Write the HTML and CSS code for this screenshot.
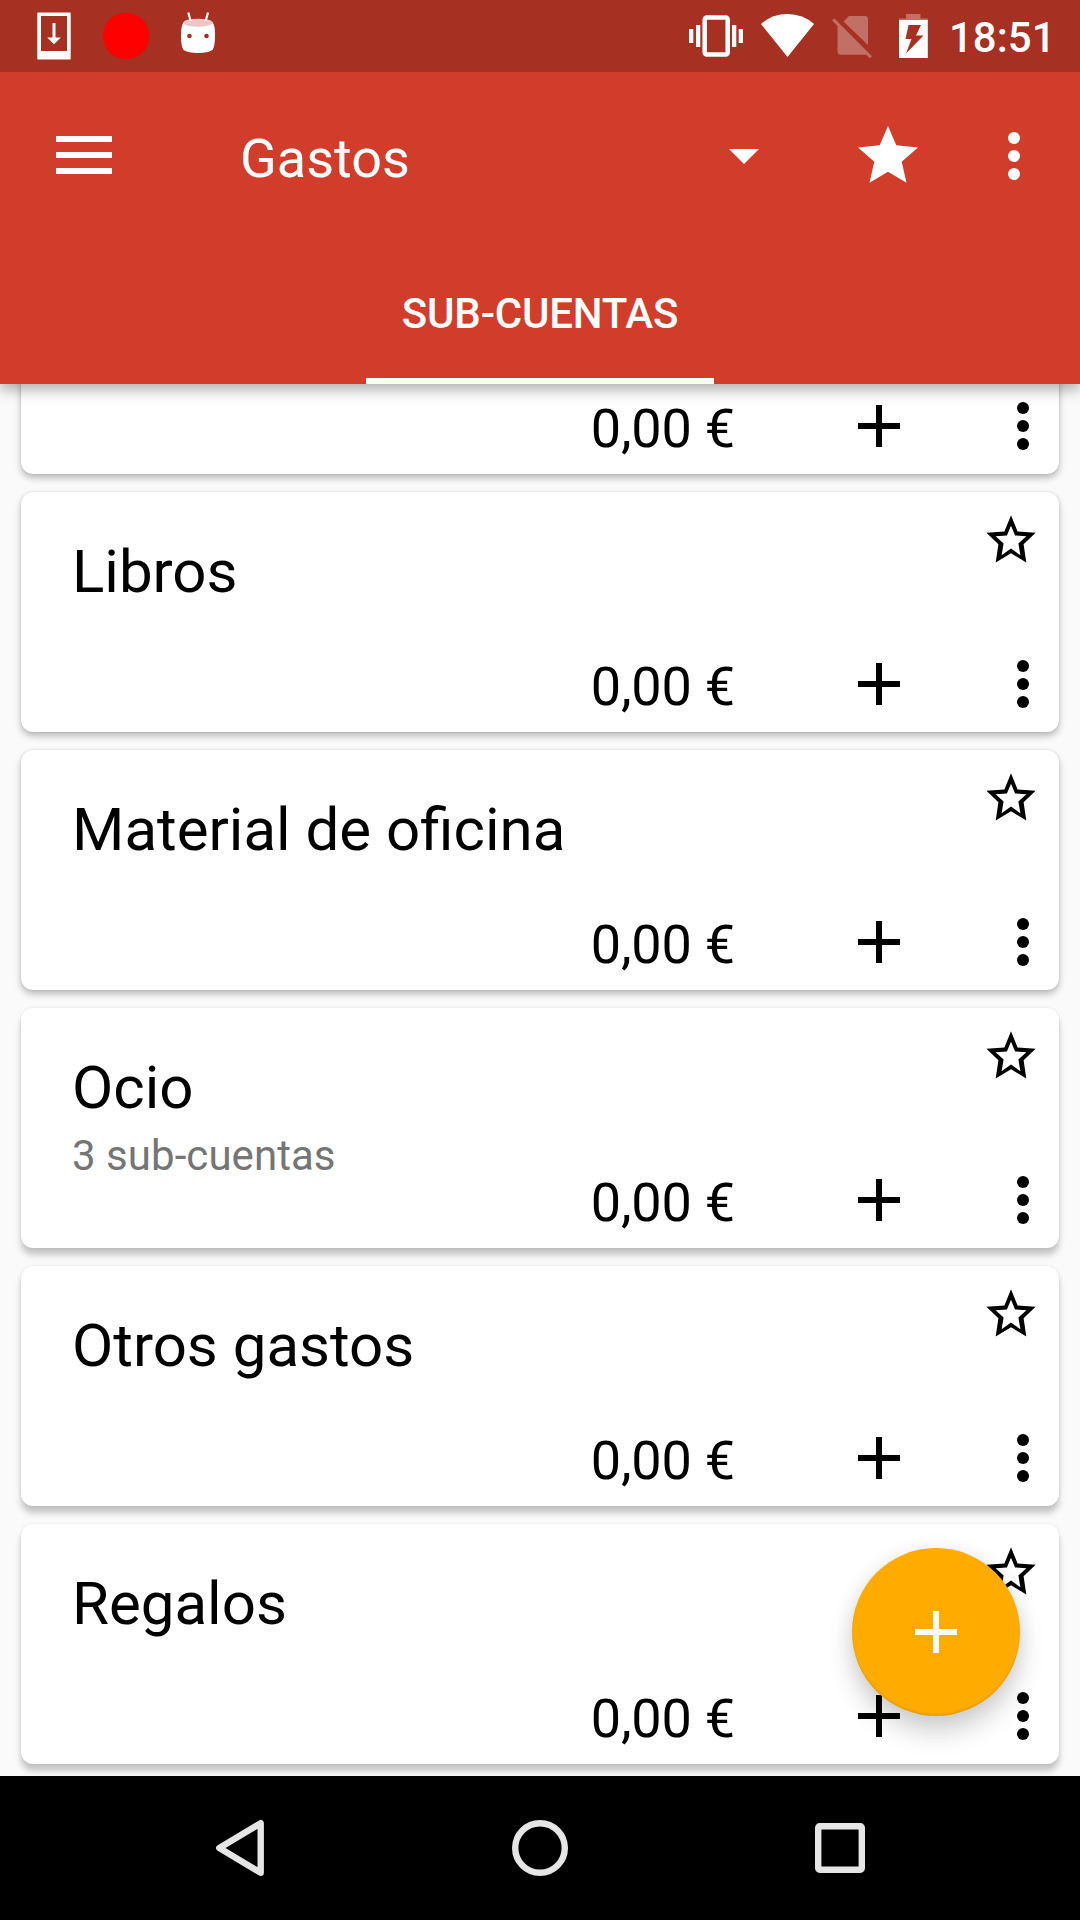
FILE: index.html
```html
<!DOCTYPE html>
<html lang="es">
<head>
<meta charset="utf-8">
<title>Gastos</title>
<link rel="stylesheet" href="styles.css">
</head>
<body>
<svg class="defs" width="0" height="0">
  <symbol id="plus" viewBox="0 0 42 42"><path d="M18 0h6v18h18v6H24v18h-6V24H0v-6h18z"/></symbol>
  <symbol id="dots" viewBox="0 0 12 48"><circle cx="6" cy="6" r="6"/><circle cx="6" cy="24" r="6"/><circle cx="6" cy="42" r="6"/></symbol>
  <symbol id="star-outline" viewBox="0 0 50 48"><path fill-rule="evenodd" d="M25 .3 31.6 16.6 49.6 17.7 37.6 29.3 40.3 47.4 25 38.2 9.7 47.4 12.4 29.3.4 17.7 18.4 16.6zM25 10.8 20.9 20.4 9.6 21.2 17.6 28.4 15.6 40.3 25 33.6 34.4 40.3 32.4 28.4 40.4 21.2 29.1 20.4z"/></symbol>
</svg>
<div class="screen">
  <header class="header">
    <div class="status">
      <svg width="72" height="72" viewBox="18 0 72 72"><path fill="#fff" fill-rule="evenodd" d="M38 12.5h32q.7 0 .7.7v45.6q0 .7-.7.7H38q-.7 0-.7-.7V13.200q0-.7.7-.7zM41 16v35h26V16z"/><path fill="#fff" d="M52.500 23h3v14.500h5.300L54 44.300 47.200 37.500h5.300z"/></svg>
      <svg width="72" height="72" viewBox="90 0 72 72"><circle cx="126" cy="36" r="23.200" fill="#f00"/></svg>
      <svg width="72" height="72" viewBox="162 0 72 72"><path fill="#fff" d="M183.500 22Q198 29 212.500 22Q215.300 26 215 36Q215 46 212.500 50Q208 53 198 53Q188 53 183.500 50Q181 46 181 36Q181 26 183.500 22z"/><ellipse cx="198" cy="22.700" rx="14.500" ry="4" fill="#e9c9c6"/><path stroke="#fff" stroke-width="2.200" d="M188.300 12.500l2.300 8.500M208 12.500l-2.300 8.500"/><circle cx="189.500" cy="36" r="2.300" fill="#a63021"/><circle cx="206.500" cy="36" r="2.300" fill="#a63021"/></svg>
      <span class="spacer"></span>
      <svg width="72" height="72" viewBox="680 0 72 72"><path fill="#fff" d="M689 29h4.300v14H689zM696 25h4.300v22H696zM732 25h4.300v22H732zM738.700 29h4.300v14h-4.300z"/><rect x="704.700" y="17.500" width="23" height="37" rx="2" fill="none" stroke="#fff" stroke-width="4.500"/></svg>
      <svg width="72" height="72" viewBox="752 0 72 72"><path fill="#fff" d="M787.500 57 761 24Q772 14 787.500 14T814 24z"/></svg>
      <svg width="60" height="72" viewBox="824 0 60 72"><g fill="#c26f65"><path d="M849 16h16q3 0 3 3v26L843.500 21.500zM837.500 23.500 867 54.300q-1 .5-2 .5h-24q-3.500 0-3.500-3.500z"/><path d="M834.300 18.500 872 56.200 869.800 58.300 832 20.600z"/></g></svg>
      <svg width="60" height="72" viewBox="884 0 60 72"><path fill="#c26f65" d="M906 14h14.500v4.500h7.300V21H899v-2.500h7z"/><path fill="#fff" fill-rule="evenodd" d="M899 20h28.800v38H899zM908.500 25 905.500 39h6L906 53.500 923.500 35.500H916L921 25z"/></svg>
      <span class="clock">18:51</span>
    </div>
    <div class="toolbar">
      <svg class="menu" width="56" height="38" viewBox="0 0 56 38" fill="#fff"><path d="M0 0h56v6H0zM0 16h56v6H0zM0 32h56v6H0z"/></svg>
      <h1 class="title">Gastos</h1>
      <svg class="caret" width="30" height="15" viewBox="0 0 30 15" fill="#fff"><path d="M0 0h30L15 15z"/></svg>
      <svg class="favourite" width="60" height="58" viewBox="0 0 60 58" fill="#fff"><path d="M30 0 38.300 19.300 60 21.500 43.700 35.700 48.500 56.800 30 45.700 11.500 56.800 16.300 35.700 0 21.500 21.700 19.300z"/></svg>
      <svg width="12" height="48" fill="#fff"><use href="#dots"/></svg>
    </div>
    <nav class="tabs"><span class="tab">SUB-CUENTAS</span></nav>
  </header>
  <main class="list">
    <article class="card">
      <div class="card-head"></div>
      <div class="card-foot"><span class="amount">0,00 €</span><svg class="add" width="42" height="42"><use href="#plus"/></svg><svg width="12" height="48"><use href="#dots"/></svg></div>
    </article>
    <article class="card">
      <div class="card-head"><div><h2 class="name">Libros</h2></div><svg class="star" width="50" height="48"><use href="#star-outline"/></svg></div>
      <div class="card-foot"><span class="amount">0,00 €</span><svg class="add" width="42" height="42"><use href="#plus"/></svg><svg width="12" height="48"><use href="#dots"/></svg></div>
    </article>
    <article class="card">
      <div class="card-head"><div><h2 class="name">Material de oficina</h2></div><svg class="star" width="50" height="48"><use href="#star-outline"/></svg></div>
      <div class="card-foot"><span class="amount">0,00 €</span><svg class="add" width="42" height="42"><use href="#plus"/></svg><svg width="12" height="48"><use href="#dots"/></svg></div>
    </article>
    <article class="card low">
      <div class="card-head"><div><h2 class="name">Ocio</h2><p class="sub">3 sub-cuentas</p></div><svg class="star" width="50" height="48"><use href="#star-outline"/></svg></div>
      <div class="card-foot"><span class="amount">0,00 €</span><svg class="add" width="42" height="42"><use href="#plus"/></svg><svg width="12" height="48"><use href="#dots"/></svg></div>
    </article>
    <article class="card low">
      <div class="card-head"><div><h2 class="name">Otros gastos</h2></div><svg class="star" width="50" height="48"><use href="#star-outline"/></svg></div>
      <div class="card-foot"><span class="amount">0,00 €</span><svg class="add" width="42" height="42"><use href="#plus"/></svg><svg width="12" height="48"><use href="#dots"/></svg></div>
    </article>
    <article class="card low">
      <div class="card-head"><div><h2 class="name">Regalos</h2></div><svg class="star" width="50" height="48"><use href="#star-outline"/></svg></div>
      <div class="card-foot"><span class="amount">0,00 €</span><svg class="add" width="42" height="42"><use href="#plus"/></svg><svg width="12" height="48"><use href="#dots"/></svg></div>
    </article>
    <button class="fab" aria-label="Añadir"><svg width="42" height="42" fill="#fff"><use href="#plus"/></svg></button>
  </main>
  <footer class="navbar">
    <svg width="60" height="60" viewBox="0 0 60 60"><path d="M50.700 5.200V54.800L9.300 30z"/></svg>
    <svg width="60" height="60" viewBox="0 0 60 60"><circle cx="30" cy="30" r="24.800"/></svg>
    <svg width="60" height="60" viewBox="0 0 60 60"><rect x="8.200" y="8.200" width="43.600" height="43.600" rx="1.500"/></svg>
  </footer>
</div>
</body>
</html>
```
FILE: styles.css
```css
* { box-sizing: border-box; margin: 0; padding: 0; }

body {
  width: 1080px;
  height: 1920px;
  overflow: hidden;
  font-family: Roboto, sans-serif;
  color: #000;
}

svg { display: block; flex: none; }
.defs { position: absolute; }

.screen { display: flex; flex-direction: column; height: 1920px; background: #fafafa; }

.header {
  position: relative;
  z-index: 1;
  flex: none;
  height: 384px;
  display: flex;
  flex-direction: column;
  background: #d13d2a;
  color: #fff;
  box-shadow: 0 5px 14px rgba(0, 0, 0, .34);
}

.status { display: flex; height: 72px; padding: 0 28px 0 18px; background: #a63021; }
.spacer { flex: 1; }
.clock { width: 108px; padding: 1px 0 0 5px; font-size: 42px; font-weight: 500; line-height: 73px; white-space: nowrap; }

.toolbar { display: flex; align-items: center; height: 168px; padding: 0 60px 0 56px; }
.menu { margin: 0 128px 2px 0; }
.title { flex: 1; padding-top: 5px; font-size: 54px; font-weight: 400; line-height: 64px; }
.caret { margin-right: 99px; }
.favourite { margin: 0 90px 2px 0; }

.tabs { display: flex; justify-content: center; height: 144px; }
.tab {
  width: 348px;
  padding-top: 49px;
  border-bottom: 6px solid #fff;
  font-size: 42px;
  font-weight: 500;
  letter-spacing: -.2px;
  line-height: 50px;
  text-align: center;
}

.list {
  position: relative;
  flex: none;
  display: flex;
  flex-direction: column;
  gap: 18px;
  height: 1392px;
  padding: 0 21px;
  overflow: hidden;
}

.card {
  flex: none;
  display: flex;
  flex-direction: column;
  height: 240px;
  border-radius: 12px;
  background: #fff;
  box-shadow: 0 4px 7px rgba(0, 0, 0, .26), 0 0 2px rgba(0, 0, 0, .16);
}
.card:first-child { margin-top: -150px; }
.card.low { box-shadow: 0 7px 6px rgba(0, 0, 0, .21), 0 0 3px rgba(0, 0, 0, .1); }

.card-head { display: flex; justify-content: space-between; height: 144px; padding: 0 23px 0 51px; }
.name { padding-top: 45px; font-size: 60px; font-weight: 400; line-height: 70px; }
.sub { padding-top: 8px; color: #757575; font-size: 42px; letter-spacing: .05px; line-height: 49px; }
.star { margin-top: 23px; }

.card-foot { display: flex; justify-content: flex-end; align-items: center; height: 96px; padding-right: 30px; }
.amount { padding-top: 5px; font-size: 54px; letter-spacing: -.2px; line-height: 64px; }
.add { margin: 0 117px 0 123px; }

.fab {
  position: absolute;
  right: 60px;
  bottom: 60px;
  display: flex;
  align-items: center;
  justify-content: center;
  width: 168px;
  height: 168px;
  border: 0;
  border-radius: 50%;
  background: #ffab00;
  box-shadow: 0 16px 26px rgba(0, 0, 0, .18), 0 0 20px rgba(0, 0, 0, .06), inset 0 -2px 2px rgba(0, 0, 0, .08);
}

.navbar {
  flex: none;
  display: flex;
  justify-content: center;
  align-items: center;
  gap: 240px;
  height: 144px;
  background: #000;
}
.navbar svg { fill: none; stroke: #e6e6e6; stroke-width: 6.400; stroke-linejoin: round; }
```
